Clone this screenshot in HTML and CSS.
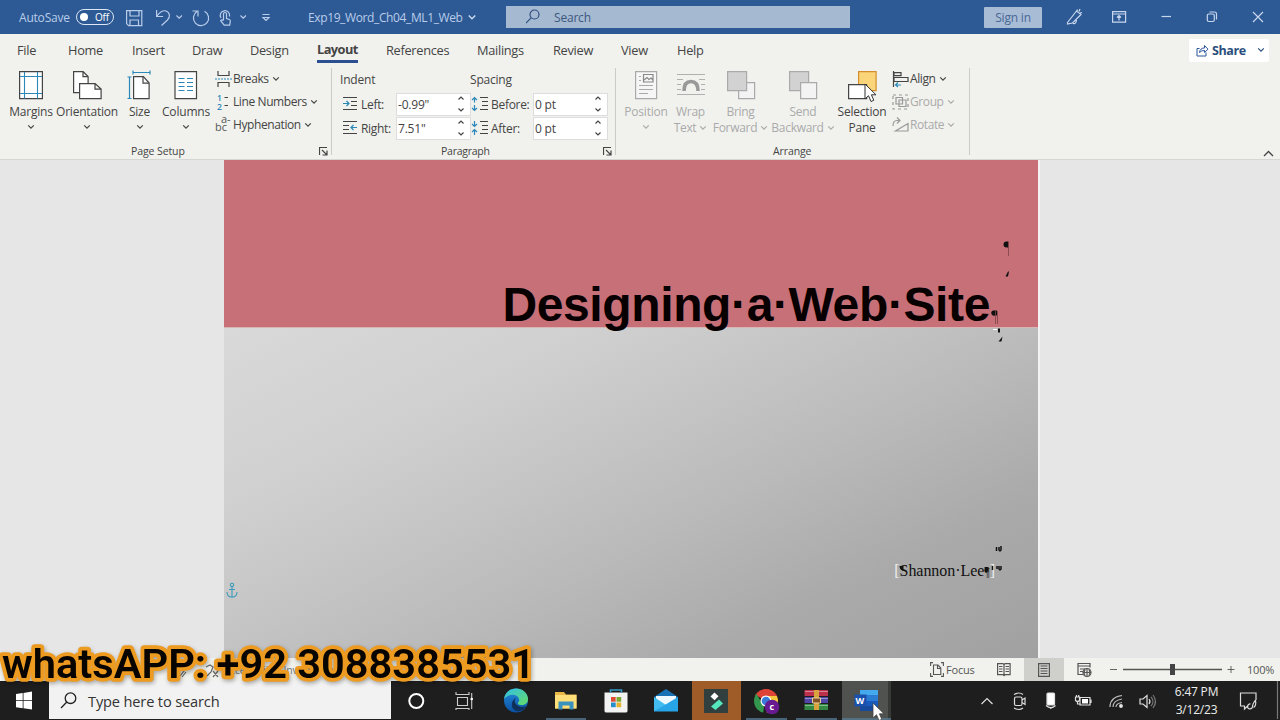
FILE: index.html
```html
<!DOCTYPE html>
<html lang="en">
<head>
<meta charset="utf-8">
<title>Exp19_Word_Ch04_ML1_Web</title>
<link rel="stylesheet" href="styles.css">
</head>
<body>
<svg class="defs" aria-hidden="true">
  <symbol id="chev" viewBox="0 0 8 6"><path d="M1.2 1.3 4 4.1 6.8 1.3" fill="none" stroke="currentColor" stroke-width="1.2"/></symbol>
  <symbol id="launch" viewBox="0 0 9 9"><path d="M.5 8V.5H8M3 3l4.5 4.5M8 3.500V8H3.500" fill="none" stroke="#444" stroke-width="1.2"/></symbol>
  <symbol id="spin" viewBox="0 0 8 18"><path d="M1.500 4.500 4 2l2.500 2.500M1.500 13.500 4 16l2.500-2.500" fill="none" stroke="#444" stroke-width="1.2"/></symbol>
  <symbol id="cursor" viewBox="0 0 13 20"><path d="M1 1v15l3.500-3.300L7 18.500l2.800-1.200-2.400-5.500H12z" fill="#fff" stroke="#333" stroke-width="1"/></symbol>
</svg>

<header class="titlebar">
  <span class="autosave">AutoSave</span>
  <span class="toggle"><i></i>Off</span>
  <svg class="quick" width="180" height="34" viewBox="120 0 180 34" fill="none" stroke="#b9cdea" stroke-width="1.2">
    <path d="M126.600 10.600h15.200v15h-13.200l-2-2zM130 10.600v5.400h9v-5.400M130 25.600v-5.600h8.500v5.600"/>
    <path d="M156.600 10v6.500h6.500M157 16c3-4 6-6 9-5 4 1.500 4.500 6 1.500 9l-6 5.500"/>
    <path d="M176.500 15.500l2.700 2.700 2.700-2.700"/>
    <path d="M204.500 11.200a7.600 7.600 0 1 1-7.500.3M192.500 11h5.500v5.500"/>
    <path d="M221 18a4.700 4.700 0 1 1 8.500-1.500M223.500 20v-6a1.500 1.500 0 0 1 3 0v4.500l3 1q1 .4.800 1.700l-.6 4h-5.500l-3.500-4.500q1.500-1.500 2.800 0"/>
    <path d="M240.500 15.500l2.700 2.700 2.700-2.700M262.500 14.500h7M263 17.500h6l-3 3z"/>
  </svg>
  <span class="docname">Exp19_Word_Ch04_ML1_Web</span>
  <svg class="docchev" width="10" height="7"><use href="#chev"/></svg>
  <div class="search">
    <svg width="16" height="16" viewBox="0 0 16 16" fill="none" stroke="#2f4f80" stroke-width="1.2"><circle cx="8.500" cy="5.500" r="4.500"/><path d="M5.300 8.700 0 14"/></svg>
    <span>Search</span>
  </div>
  <span class="signin">Sign in</span>
  <svg class="winbtns" width="220" height="34" viewBox="1060 0 220 34" fill="none" stroke="#c8d7ee" stroke-width="1.2">
    <path d="M1067.500 22.500l9-11.500 4.500 3.500-8.500 8.500-5 1zM1077 9.500l.5 1.500M1080 9l-1 2.500M1082 12.500l-2 .5M1073 23.500q3 1 3.500-3.500"/>
    <path d="M1112.600 11.600h13v10.500h-13zM1112.600 14h13M1119 20.500v-5M1117 17.500l2-2 2 2"/>
    <path d="M1161.500 16.500h9.500"/>
    <rect x="1207.300" y="14" width="7" height="7.500" rx="1.500"/><path d="M1209.500 12h5q2 0 2 2v5.500"/>
    <path d="M1253 12l10 10M1263 12l-10 10"/>
  </svg>
</header>

<section class="ribbon">
  <nav class="tabs">
    <span class="w51">File</span><span class="w64">Home</span><span class="w60">Insert</span><span class="w58">Draw</span><span class="w67">Design</span><span class="w69 active"><b>Layout</b></span><span class="w91">References</span><span class="w76">Mailings</span><span class="w68">Review</span><span class="w56">View</span><span>Help</span>
    <div class="share">
      <svg width="13" height="13" viewBox="0 0 13 13" fill="none" stroke="#2b579a" stroke-width="1"><path d="M3.500 4.500H1v7.500h9V8.500M3.500 8.500q.5-4.500 5-4.500V1.500l3.500 3.700-3.500 3.300V6.500q-3-.3-5 2z"/></svg>
      <b>Share</b>
      <svg class="sc" width="8" height="6"><use href="#chev"/></svg>
    </div>
  </nav>
  <div class="groups">
    <div class="group setup">
      <div class="controls">
        <div class="big b-margins">
          <svg width="26" height="30" viewBox="0 0 26 30"><path d="M1.600 1.600h22.800v27H1.600z" fill="#fff" stroke="#444" stroke-width="1.2"/><path d="M6.500 2v26.500M19.500 2v26.500M2 6.500h22M2 23.500h22" stroke="#2b88b8" stroke-width="1.1"/></svg>
          <span>Margins</span><svg class="ch" width="8" height="6"><use href="#chev"/></svg>
        </div>
        <div class="big b-orient">
          <svg width="30" height="30" viewBox="0 0 30 30" fill="#fff" stroke="#444" stroke-width="1.200"><path d="M1.600 1.600h9.500l5 5v16H1.600zM11 1.600v5h5"/><path d="M7.600 13.600h15.500l6 5.500v9.500H7.600zM23 13.600v5.500h6"/></svg>
          <span>Orientation</span><svg class="ch" width="8" height="6"><use href="#chev"/></svg>
        </div>
        <div class="big b-size">
          <svg width="26" height="30" viewBox="0 0 26 30" fill="none" stroke="#444" stroke-width="1.200"><path d="M6.600 6.600h9.800l5.700 6.500v15.500H6.600z" fill="#fff"/><path d="M16 6.600v6.500h6"/><path d="M6 2.500h17M6 .5v4M23 .5v4M2.500 7v21.500M.5 7h4M.5 28.500h4" stroke="#2b88b8"/></svg>
          <span>Size</span><svg class="ch" width="8" height="6"><use href="#chev"/></svg>
        </div>
        <div class="big b-cols">
          <svg width="26" height="30" viewBox="0 0 26 30"><path d="M2 1.600h21.500v27H2z" fill="#fff" stroke="#444" stroke-width="1.200"/><path d="M5.500 8.500h6M5.500 12.500h6M5.500 16.500h6M5.500 20.500h6M14 8.500h6M14 12.500h6M14 16.500h6M14 20.500h6" stroke="#2b88b8" stroke-width="1.2"/></svg>
          <span>Columns</span><svg class="ch" width="8" height="6"><use href="#chev"/></svg>
        </div>
        <div class="stack">
          <div><svg width="18" height="16" viewBox="0 0 18 16" fill="none" stroke="#444" stroke-width="1.200"><path d="M3 0v4.500h11V0M3 16v-4.500h11V16"/><path d="M0 8h17" stroke="#2b88b8" stroke-dasharray="2 1"/></svg><span>Breaks</span><svg width="8" height="6"><use href="#chev"/></svg></div>
          <div><svg width="18" height="16" viewBox="0 0 18 16"><text x="2" y="7" class="tiny blue">1</text><text x="2" y="15.500" class="tiny blue">2</text><path d="M9.500 3.500h3.500M9.500 11.500h3.500" stroke="#444" stroke-width="1.200"/></svg><span>Line Numbers</span><svg width="8" height="6"><use href="#chev"/></svg></div>
          <div><svg width="18" height="18" viewBox="0 0 18 18"><text x="6" y="7" class="hy">a-</text><text x="0" y="15" class="hy">bc</text></svg><span>Hyphenation</span><svg width="8" height="6"><use href="#chev"/></svg></div>
        </div>
      </div>
      <div class="caption"><span class="cap-setup">Page Setup</span><svg width="9" height="9"><use href="#launch"/></svg></div>
    </div>

    <div class="group para">
      <div class="fields">
        <span class="head">Indent</span><span class="head h2">Spacing</span>
        <svg width="16" height="16" viewBox="0 0 16 16" fill="none" stroke="#444" stroke-width="1.200"><path d="M1 1.500h14M9 5.500h6M9 9.500h6M1 13.500h14"/><path d="M1 7.500h6M4.500 5l2.500 2.500L4.500 10" stroke="#2b88b8"/></svg>
        <label>Left:</label><div class="input">-0.99"<svg width="8" height="18"><use href="#spin"/></svg></div>
        <svg width="18" height="16" viewBox="0 0 18 16" fill="none" stroke="#444" stroke-width="1.200"><path d="M9 1.500h8M11 5.500h6M11 9.500h6M9 13.500h8"/><path d="M3.500 1.500v5M1 4l2.500-2.500L6 4M3.500 9v5.500M1 12l2.500 2.500L6 12" stroke="#2b88b8"/></svg>
        <label>Before:</label><div class="input">0 pt<svg width="8" height="18"><use href="#spin"/></svg></div>
        <svg width="16" height="16" viewBox="0 0 16 16" fill="none" stroke="#444" stroke-width="1.200"><path d="M1 1.500h14M1 5.500h6M1 9.500h6M1 13.500h14"/><path d="M15 7.500H9M11.500 5 9 7.500l2.500 2.500" stroke="#2b88b8"/></svg>
        <label>Right:</label><div class="input">7.51"<svg width="8" height="18"><use href="#spin"/></svg></div>
        <svg width="18" height="16" viewBox="0 0 18 16" fill="none" stroke="#444" stroke-width="1.200"><path d="M9 1.500h8M11 5.500h6M11 9.500h6M9 13.500h8"/><path d="M3.500 1v5.500M1 4l2.500 2.500L6 4M3.500 15V9.500M1 12l2.500-2.500L6 12" stroke="#2b88b8"/></svg>
        <label>After:</label><div class="input">0 pt<svg width="8" height="18"><use href="#spin"/></svg></div>
      </div>
      <div class="caption"><span class="cap-para">Paragraph</span><svg width="9" height="9"><use href="#launch"/></svg></div>
    </div>

    <div class="group arrange">
      <div class="controls">
        <div class="big dim b-pos">
          <svg width="26" height="30" viewBox="0 0 26 30" fill="none" stroke="#aaa" stroke-width="1.200"><path d="M2.600 1.600h21v27h-21z" fill="#f6f6f6"/><path d="M10.500 4.500h9.500v7.500h-9.500zM11 10l3-2.500 2 2 2-1.500 2 2" stroke="#888"/><path d="M6 6.500h2M6 10.500h2M6 15.500h14M6 19.500h14M6 23.500h9"/></svg>
          <span>Position</span><svg class="ch" width="8" height="6"><use href="#chev"/></svg>
        </div>
        <div class="big dim b-wrap">
          <svg width="30" height="30" viewBox="0 0 30 30" fill="none" stroke="#b0b0b0" stroke-width="1.200"><path d="M1 4.500h28M1 9.500h6M23 9.500h6M1 14.500h4M25 14.500h4M1 19.500h4M25 19.500h4M1 24.500h28"/><path d="M8 21q0-9.500 7-9.500t7 9.500" stroke="#999" stroke-width="3.600"/></svg>
          <span>Wrap</span><span>Text <svg width="8" height="6"><use href="#chev"/></svg></span>
        </div>
        <div class="big dim b-bring">
          <svg width="30" height="30" viewBox="0 0 30 30" stroke="#aaa" stroke-width="1.200"><path d="M12.600 12.600h16v16h-16z" fill="#f3f3f3"/><path d="M1.600 1.600h19v19h-19z" fill="#d2d2d2"/></svg>
          <span>Bring</span><span>Forward <svg width="8" height="6"><use href="#chev"/></svg></span>
        </div>
        <div class="big dim b-send">
          <svg width="30" height="30" viewBox="0 0 30 30" stroke="#aaa" stroke-width="1.200"><path d="M1.600 1.600h19v19h-19z" fill="#d2d2d2"/><path d="M12.600 12.600h16v16h-16z" fill="#f3f3f3"/></svg>
          <span>Send</span><span>Backward <svg width="8" height="6"><use href="#chev"/></svg></span>
        </div>
        <div class="big b-pane">
          <svg width="30" height="30" viewBox="0 0 30 30"><path d="M11.600 1.600h17.500v19H11.600z" fill="#fbd579" stroke="#d58e2b" stroke-width="1.200"/><path d="M1.600 14.600h18v14h-18z" fill="#fff" stroke="#444" stroke-width="1.200"/></svg>
          <span>Selection</span><span>Pane</span>
          <svg class="ptr" width="13" height="20"><use href="#cursor"/></svg>
        </div>
        <div class="stack">
          <div><svg width="18" height="16" viewBox="0 0 18 16" fill="none" stroke="#444" stroke-width="1.200"><path d="M1.500 0v16M2 1.600h7v3H2zM2 6.500h14v4H2z"/><path d="M3.500 14H9M6 11.500 3.500 14 6 16" stroke="#2b88b8"/></svg><span>Align</span><svg width="8" height="6"><use href="#chev"/></svg></div>
          <div class="dim"><svg width="18" height="16" viewBox="0 0 18 16" fill="none" stroke="#999" stroke-width="1.200"><path d="M4 3.500h6.500V10H4zM7 6h7v6.500H7z"/><path d="M1 1h15v14H1z" stroke-dasharray="3 3"/></svg><span>Group</span><svg width="8" height="6"><use href="#chev"/></svg></div>
          <div class="dim"><svg width="18" height="16" viewBox="0 0 18 16" fill="none" stroke="#999" stroke-width="1.200"><path d="M3.500 14h12.500V6.500zM1 9q0-5.500 4-5.500H7.500M5 .5 8 3.500l-3 3"/></svg><span>Rotate</span><svg width="8" height="6"><use href="#chev"/></svg></div>
        </div>
      </div>
      <div class="caption"><span class="cap-arr">Arrange</span></div>
    </div>
    <svg class="collapse" width="11" height="7" viewBox="0 0 11 7"><path d="M1 6l4.500-4.500L10 6" fill="none" stroke="#444" stroke-width="1.300"/></svg>
  </div>
</section>

<main class="workspace">
  <article class="page">
    <div class="cover"><h1>Designing·a·Web·Site</h1></div>
    <div class="body"><p><i>[</i>Shannon·Lee<small>¶</small><i>]</i></p></div>
    <svg class="marks" width="814" height="498" viewBox="224 160 814 498">
      <path d="M1008.500 241.500v6h-2a2.500 2.500 0 0 1 0-6zM1008 271.500l1 0-1 5-2.500 0zM993 310.500h4v5h-2a2.500 2.500 0 0 1-2-5zM998 328.500h2v4h-2zM1002.500 336.500l-1 5-3 0z" fill="#111"/>
      <path d="M1008.500 242v14M995.500 311v13M997.500 311v13" stroke="#7c4449" stroke-width=".8"/>
      <path d="M993 329.500h4" stroke="#fff"/>
      <path d="M996.500 547v4M999 547v3q1 2 2 0v-4M992.500 566v4M997 566v3M999 566v3q1 2 2 0v-3" fill="none" stroke="#111" stroke-width="1.500"/>
      <path d="M899.500 566h4v5q-4-1-4-5M984.500 567h4v5q-4-1-4-5" fill="#111"/>
      <g fill="none" stroke="#3c9bb8" stroke-width="1.100"><circle cx="232" cy="585" r="1.700"/><path d="M232 587v10M229 589.500h6M227 592q0 5 5 5.300 5-.3 5-5.300"/></g>
    </svg>
  </article>
</main>

<footer class="status">
  <svg class="proof" width="48" height="23" viewBox="176 658 48 23" fill="none" stroke="#666" stroke-width="1.200"><path d="M180 667l4 4-4 5M186 672l-4 5M206 667l4-2 3 2-2 5-4 4M213 671l5 6M218 671l-5 6"/></svg>
  <span class="access">Accessibility: Investigate</span>
  <svg class="fo" width="14" height="15" viewBox="0 0 14 15" fill="none" stroke="#555" stroke-width="1.100"><path d="M3 .6H.6V4M11 .6h2.400V4M3 14.400H.6V11M11 14.400h2.400V11M3.500 3h4.500l2.800 3v6.500H3.500zM7.500 3v3.500h3.500"/></svg>
  <span class="focus">Focus</span>
  <svg class="views" width="120" height="23" viewBox="984 658 120 23" fill="none" stroke="#555" stroke-width="1.200">
    <path d="M997.600 663.600h5.500l1 1 1-1h5v11h-5l-1 1-1-1h-5.500zM1004 665v10M999 666.500h3.500M999 669h3.500M999 671.500h3.500M1005.500 666.500h3.500M1005.500 669h3.500M1005.500 671.500h3.500"/>
    <path d="M1024 658h40v23h-40z" fill="#cfcfcb" stroke="none"/><path d="M1038.600 663.600h10.800v12.800h-10.800zM1040.500 666h7M1040.500 668.500h7M1040.500 671h7M1040.500 673.500h7"/>
    <path d="M1083 674.500h-5v-11h12v4M1078 666h12M1080 669h5M1080 671.500h3"/><circle cx="1087" cy="672.500" r="4"/><path d="M1083 672.500h8M1087 668.500v8M1085 669q-1.500 3.500 0 7M1089 669q1.500 3.500 0 7"/>
  </svg>
  <svg class="zoom" width="124" height="23" viewBox="1108 658 124 23" stroke="#555"><path d="M1110 669.500h7M1227.500 669.500h7M1231 666v7" stroke-width=".9"/><path d="M1123 669.500h99" stroke-width="1.300"/><path d="M1170 664h5v11h-5z" fill="#444" stroke="none"/></svg>
  <span class="pct">100%</span>
</footer>

<div class="taskbar">
  <svg class="start" width="49" height="39" viewBox="0 681 49 39"><path d="M16 694l6.700-1v7.200H16zM23.500 692.900l8.500-1.400v8.700h-8.500zM16 701h6.700v7.200l-6.700-1zM23.500 701H32v8.500l-8.500-1.300z" fill="#fff"/></svg>
  <div class="tsearch"><svg width="17" height="17" viewBox="0 0 17 17" fill="none" stroke="#222" stroke-width="1.300"><circle cx="10.500" cy="6.200" r="5.300"/><path d="M6.800 10 1 16"/></svg><span>Type here to search</span></div>
  <svg class="apps" width="559" height="39" viewBox="391 681 559 39">
    <defs>
      <linearGradient id="eg" x1="0" y1="0" x2="1" y2="1"><stop offset="0" stop-color="#32bfe8"/><stop offset="1" stop-color="#65dc65"/></linearGradient>
      <linearGradient id="eb" x1="0" y1="0" x2="0" y2="1"><stop offset="0" stop-color="#238ee0"/><stop offset="1" stop-color="#0c4f9f"/></linearGradient>
      <clipPath id="cc"><circle cx="766" cy="701" r="12"/></clipPath>
    </defs>
    <path d="M692 681h49v39h-49z" fill="#9f5b28"/><path d="M842 681h46v39h-46z" fill="#50524f"/><path d="M888 681h3v39h-3z" fill="#373b38"/>
    <circle cx="416.300" cy="701" r="7" fill="none" stroke="#fff" stroke-width="2"/>
    <path d="M457.500 697.500h10v8h-10zM456 692v2.500h13V692M456 710v-1.500h13v1.500M471.700 693v16" fill="none" stroke="#ccc" stroke-width="1.100"/><circle cx="471.700" cy="699" r="1.300" fill="#fff"/>
    <circle cx="516" cy="700.500" r="12" fill="url(#eb)"/><path d="M504 699c1-7 6-10.500 12-10.500 7 0 12 5 12 10.500 0 4-3 6-6.500 6-3 0-4.500-1.500-3-3 1.500-2 .5-6-4-7-4-.8-8 1-10.500 4z" fill="url(#eg)"/><path d="M516.500 697.500c-3 2-2.500 7 3 9 3 1 5 .5 7-.5-3 5-8 6-11 4.500-6-3-4-11 1-13z" fill="#102f59"/>
    <path d="M555 692h9l2 2.500h10.500v14H555z" fill="#eab846"/><path d="M555 695h21.500v13.500H555z" fill="#ffdf79"/><path d="M558.500 709.500v-8h15v8h-4v-4h-7v4z" fill="#3991bd"/>
    <path d="M604.500 692.500h23v18.500q0 1.500-2 1.500h-19q-2 0-2-1.500z" fill="#f3f3f3"/><path d="M610.500 692.500v-2.500h11v2.500" fill="none" stroke="#349ac9" stroke-width="1.600"/><path d="M611 697h4.700v4.700H611z" fill="#df4c35"/><path d="M616.500 697h4.700v4.700h-4.700z" fill="#7aaa31"/><path d="M611 702.500h4.700v4.700H611z" fill="#288fcb"/><path d="M616.500 702.500h4.700v4.700h-4.700z" fill="#e9b42d"/>
    <path d="M654 697l12-8 12 8v14h-24z" fill="#1672b5"/><path d="M656 696h20v8l-10 5-10-5z" fill="#edf8ff"/><path d="M654 697l12 8-12 6.500z" fill="#42bcf0"/><path d="M678 697v14.500h-24z" fill="#28a5e8"/>
    <path d="M704 689h24v24h-24z" fill="#31403e"/><path d="M714.500 692.500l4 3.700-4 4-4-3.700z" fill="#fff"/><path d="M719 699.500l4 4-7.500 6.500-4.500-3.500z" fill="#55e7bd"/>
    <g clip-path="url(#cc)"><path d="M766 701L755.600 695A12 12 0 0 1 776.400 695z" fill="#dd4437"/><path d="M754 689h24v7h-24z" fill="#dd4437"/><path d="M754 695l2-2 8 14-1 7h-10z" fill="#33964c"/><path d="M766 696h14v18h-14l5-10z" fill="#f6c83c"/></g><circle cx="766" cy="701" r="5.500" fill="#fff"/><circle cx="766" cy="701" r="4.300" fill="#397bd8"/><circle cx="772" cy="707" r="7.300" fill="#681b91"/><text x="769.500" y="710" class="cletter">c</text>
    <path d="M804.500 690h23.500v6h-23.500z" fill="#bd304b"/><path d="M804.500 697h23.500v6h-23.500z" fill="#4e45a7"/><path d="M804.500 704h23.500v6h-23.500z" fill="#348a45"/><path d="M805 691.500h23M805 698.500h23M805 705.500h23" stroke="#fff" stroke-opacity=".4"/><path d="M814 690h5v20h-5z" fill="#d8a33c"/><path d="M812.500 698h8v5h-8z" fill="#825127" stroke="#e7d29d"/>
    <path d="M860 690h18v21h-18z" fill="#174a9b"/><path d="M860 690h18v5.500h-18z" fill="#45a9ee"/><path d="M860 695.500h18v5.500h-18z" fill="#2b7cd3"/><path d="M860 701h18v5h-18z" fill="#185abd"/><path d="M854.500 694.500h12v12h-12z" fill="#1951ad"/><text x="855.600" y="704.300" class="wletter">W</text>
    <path d="M546 719h40M746 719h41M796 719h41M842 719h49" stroke="#557c97" stroke-width="1.500"/>
    <g transform="translate(872 702)"><path d="M1 1v15l3.500-3.300L7 18.500l2.800-1.200-2.400-5.500H12z" fill="#fff" stroke="#444" stroke-width=".8"/></g>
  </svg>
  <svg class="tray" width="220" height="39" viewBox="950 681 220 39" fill="none" stroke="#ddd" stroke-width="1.200">
    <path d="M981.500 704l5.500-5.500 5.500 5.500"/>
    <rect x="1014.500" y="697" width="7.500" height="8.500" rx="1.500"/><path d="M1022 700l3-2v6.500l-3-2M1014 694.500q5-3 9 0M1014 708q5 3 9 0"/>
    <rect x="1047" y="693" width="7.500" height="12" rx="1" fill="#fff"/><path d="M1046 705.500q5 4.500 9.500 0M1050.800 708v1"/>
    <path d="M1080 697.500h10v7.500h-10zM1091 699.500v3.500"/><path d="M1082 699h6v4.500h-6z" fill="#fff" stroke="none"/><path d="M1075.500 697v3.500q2 2 4 0V697zM1077.500 701v3h3M1076.500 695v2M1078.700 695v2"/>
    <path d="M1110 707q0-10 12-11.500M1113 707q0-6.500 9-8M1116 707q0-3.500 6-4.500" stroke="#bbb"/><circle cx="1121" cy="706" r="1.300" fill="#fff"/>
    <path d="M1140 699h3l4-3.500v12l-4-3.500h-3zM1149 699q2 2.500 0 5"/><path d="M1151 697q4 4.500 0 9M1153 695q5 6.500 0 13" stroke="#777"/>
  </svg>
  <div class="clock"><span>6:47 PM</span><span>3/12/23</span></div>
  <svg class="note" width="57" height="39" viewBox="1223 681 57 39" fill="none" stroke="#ddd" stroke-width="1.200"><path d="M1256 700v-7h-15.500v13h4v3l3-3h1M1255.500 700q-3 4-3 6.500a2.500 2.500 0 1 1-2-2.500M1255.500 700q1 6-2 7.500"/><path d="M1277.500 681v38" stroke="#777"/></svg>
</div>
<svg class="contact" width="560" height="60" viewBox="0 635 560 60"><text x="2" y="677.500" textLength="533" lengthAdjust="spacingAndGlyphs">whatsAPP: +92 3088385531</text></svg>
</body>
</html>
```
FILE: styles.css
```css
* { box-sizing: border-box; }
body { margin: 0; width: 1280px; height: 720px; overflow: hidden; position: relative; display: flex; flex-direction: column; font-family: "Open Sans", "Noto Sans", sans-serif; font-size: 12px; color: #444; letter-spacing: -0.2px; }
svg { display: block; flex: none; }
span, label { white-space: nowrap; }
.defs { position: absolute; width: 0; height: 0; }

.titlebar { height: 34px; flex: none; background: #2d5994; color: #b9cdea; display: flex; align-items: center; }
.autosave { margin-left: 19px; width: 57px; }
.toggle { width: 38px; height: 16px; border: 1.3px solid #dce7f7; border-radius: 8px; display: flex; align-items: center; gap: 7px; padding-left: 3px; font-size: 10px; color: #fff; }
.toggle i { width: 8px; height: 8px; border-radius: 50%; background: #fff; }
.quick { margin-left: 6px; }
.docname { margin-left: 8px; width: 159px; letter-spacing: -0.38px; }
.docchev { color: #cbdaf0; }
.search { margin-left: 29px; width: 344px; height: 22px; background: #a5b9d1; display: flex; align-items: center; padding-left: 20px; color: #3d587f; }
.search span { margin-left: 12px; }
.signin { margin-left: 134px; width: 58px; height: 21px; line-height: 21px; text-align: center; background: #a9bcd6; color: #486894; border-radius: 1px; }
.winbtns { margin-left: auto; }

.ribbon { height: 126px; flex: none; background: #f1f2ee; border-bottom: 1px solid #d6d6d4; display: flex; flex-direction: column; }
.tabs { height: 32px; flex: none; display: flex; align-items: center; padding-left: 17px; font-size: 12.8px; letter-spacing: -0.3px; }
.w51 { width: 51px; } .w64 { width: 64px; } .w60 { width: 60px; } .w58 { width: 58px; } .w67 { width: 67px; }
.w69 { width: 69px; } .w91 { width: 91px; } .w76 { width: 76px; } .w68 { width: 68px; } .w56 { width: 56px; }
.active b { display: inline-block; width: 41px; height: 24px; line-height: 20px; margin-top: 2px; border-bottom: 3px solid #2b4f91; letter-spacing: -0.55px; }
.share { margin-left: auto; margin-right: 11px; width: 80px; height: 23px; background: #fff; border-radius: 2px; display: flex; align-items: center; padding-left: 7px; color: #2b4f7c; font-size: 12.5px; }
.share b { margin-left: 3px; letter-spacing: -0.4px; }
.sc { margin-left: auto; margin-right: 4px; }

.groups { flex: none; height: 93px; display: flex; }
.group { display: flex; flex-direction: column; height: 93px; position: relative; }
.group::after { content: ""; position: absolute; right: 0; top: 2px; width: 1px; height: 87px; background: #cbcbc8; }
.setup { width: 332px; }
.para { width: 284px; }
.arrange { width: 354px; }
.controls { display: flex; height: 77px; flex: none; }
.big { display: flex; flex-direction: column; align-items: center; padding-top: 4px; position: relative; }
.big > span { height: 16px; line-height: 16px; display: flex; align-items: center; gap: 3px; }
.big > svg:first-child { margin-bottom: 4px; }
.ch { margin-top: 4px; }
.b-margins { width: 62px; } .b-orient { width: 50px; } .b-size { width: 55px; } .b-cols { width: 38px; }
.b-pos { width: 60px; } .b-wrap { width: 29px; } .b-bring { width: 71px; } .b-send { width: 54px; } .b-pane { width: 64px; }
.b-wrap, .b-bring, .b-send { letter-spacing: -0.3px; }
.dim { color: #aaa; }
.stack { display: flex; flex-direction: column; letter-spacing: -0.4px; padding-top: 1px; }
.stack svg { overflow: visible; }
.stack > div { height: 23px; flex: none; display: flex; align-items: center; }
.stack span { margin: 0 3px 0 0; }
.setup .stack { margin-left: 10px; }
.arrange .stack { margin-left: -2px; }
.ptr { position: absolute; left: 34px; top: 17px; }
.tiny { font-size: 8.5px; font-weight: 600; } .blue { fill: #2b88b8; }
.hy { font-size: 11px; fill: #555; letter-spacing: 0; }
.caption { height: 16px; display: flex; align-items: center; font-size: 10.5px; letter-spacing: -0.1px; }
.caption svg { margin-left: auto; margin-right: 4px; }
.cap-setup { margin-left: 131px; } .cap-para { margin-left: 109px; letter-spacing: -0.25px; } .cap-arr { margin-left: 157px; }
.fields { height: 77px; flex: none; padding: 1px 0 2px 10px; display: grid; grid-template-columns: 19px 35px 75px 20px 42px 75px; grid-template-rows: 25px 24px 24px; align-items: center; }
.fields .head { grid-column: 1 / 4; }
.fields .h2 { grid-column: 4 / 7; margin-left: -1px; }
.fields .head:first-child { margin-left: -2px; }
.fields label { letter-spacing: -0.3px; }
.input { height: 23px; border: 1px solid #ddd; background: #fff; display: flex; align-items: center; padding-left: 1px; }
.input svg { margin-left: auto; margin-right: 5px; }
.collapse { margin: 84px 6px 0 auto; }

.workspace { height: 498px; flex: none; background: #e6e6e6; padding-left: 224px; }
.page { width: 816px; height: 498px; position: relative; border-right: 2px solid #f3f3f3; }
.cover { height: 168px; background: #c77078; display: flex; justify-content: flex-end; align-items: flex-end; padding-right: 48px; border-bottom: 1px solid #d9b5b5; }
h1 { margin: 0 0 -6px; font: bold 48px/56px "Liberation Sans", Arial, sans-serif; color: #080000; letter-spacing: -0.38px; position: relative; z-index: 1; }
.body { height: 330px; background: linear-gradient(154deg, #d9d9d9 0%, #d0d0d0 25%, #c4c4c4 43%, #bababa 57%, #aaaaaa 77%, #a1a1a1 100%); display: flex; justify-content: flex-end; padding: 232px 43px 0 0; }
.body p { margin: 0; font: 16px/22px "Liberation Serif", serif; color: #111; letter-spacing: -0.05px; }
.body i { color: #eee; font-style: normal; }
.body small { font-size: 12px; }
.marks { position: absolute; left: 0; top: 0; z-index: 2; }

.status { height: 23px; flex: none; background: #f1f2ed; display: flex; align-items: center; font-size: 11px; color: #555; }
.proof { margin-left: 176px; }
.access { width: 706px; color: #777; font-size: 10.5px; letter-spacing: -0.3px; }
.focus { margin-left: 2px; width: 38px; }
.zoom { margin-left: 4px; overflow: visible; }
.pct { margin-left: 15px; }

.taskbar { height: 39px; flex: none; background: #1e1e1e; display: flex; align-items: flex-start; }
.tsearch { width: 342px; height: 38px; background: #f2f2f2; display: flex; align-items: center; padding-left: 11px; color: #333; font-size: 14.600px; letter-spacing: -0.15px; }
.tsearch span { margin: 1px 0 0 11px; }
.clock { width: 53px; height: 39px; display: flex; flex-direction: column; align-items: center; color: #eee; font-size: 12px; line-height: 18px; padding-top: 2px; }
.clock span { height: 18px; }
.wletter { font: bold 9px "Open Sans", sans-serif; fill: #fff; }
.cletter { font: bold 9px "Open Sans", sans-serif; fill: #fff; }
.contact { position: absolute; left: 0; top: 635px; z-index: 4; }
.contact text { font: 600 41.500px Roboto, sans-serif; letter-spacing: 0; fill: #080400; stroke: #ec9a20; stroke-width: 7.500px; stroke-linejoin: round; paint-order: stroke; filter: drop-shadow(1px 2px 2px rgba(0,0,0,.3)); }
```
